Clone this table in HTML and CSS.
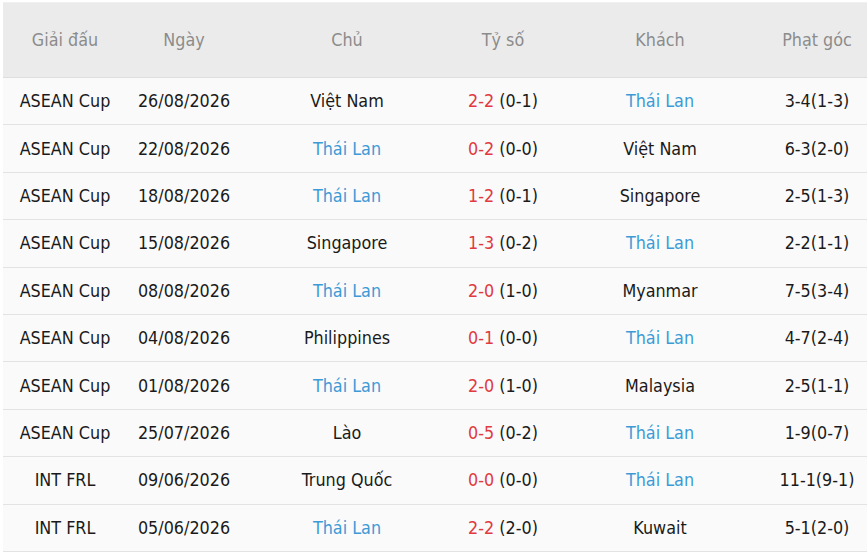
FILE: index.html
```html
<!DOCTYPE html>
<html lang="vi">
<head>
<meta charset="utf-8">
<link rel="stylesheet" href="styles.css">
</head>
<body>
<table class="matches">
  <colgroup>
    <col class="c1"><col class="c2"><col class="c3"><col class="c4"><col class="c5"><col class="c6">
  </colgroup>
  <thead>
    <tr><th>Giải đấu</th><th>Ngày</th><th>Chủ</th><th>Tỷ số</th><th>Khách</th><th>Phạt góc</th></tr>
  </thead>
  <tbody>
    <tr><td>ASEAN Cup</td><td>26/08/2026</td><td>Việt Nam</td><td><span class="sc">2-2</span> (0-1)</td><td class="th">Thái Lan</td><td>3-4(1-3)</td></tr>
    <tr><td>ASEAN Cup</td><td>22/08/2026</td><td class="th">Thái Lan</td><td><span class="sc">0-2</span> (0-0)</td><td>Việt Nam</td><td>6-3(2-0)</td></tr>
    <tr><td>ASEAN Cup</td><td>18/08/2026</td><td class="th">Thái Lan</td><td><span class="sc">1-2</span> (0-1)</td><td>Singapore</td><td>2-5(1-3)</td></tr>
    <tr><td>ASEAN Cup</td><td>15/08/2026</td><td>Singapore</td><td><span class="sc">1-3</span> (0-2)</td><td class="th">Thái Lan</td><td>2-2(1-1)</td></tr>
    <tr><td>ASEAN Cup</td><td>08/08/2026</td><td class="th">Thái Lan</td><td><span class="sc">2-0</span> (1-0)</td><td>Myanmar</td><td>7-5(3-4)</td></tr>
    <tr><td>ASEAN Cup</td><td>04/08/2026</td><td>Philippines</td><td><span class="sc">0-1</span> (0-0)</td><td class="th">Thái Lan</td><td>4-7(2-4)</td></tr>
    <tr><td>ASEAN Cup</td><td>01/08/2026</td><td class="th">Thái Lan</td><td><span class="sc">2-0</span> (1-0)</td><td>Malaysia</td><td>2-5(1-1)</td></tr>
    <tr><td>ASEAN Cup</td><td>25/07/2026</td><td>Lào</td><td><span class="sc">0-5</span> (0-2)</td><td class="th">Thái Lan</td><td>1-9(0-7)</td></tr>
    <tr><td>INT FRL</td><td>09/06/2026</td><td>Trung Quốc</td><td><span class="sc">0-0</span> (0-0)</td><td class="th">Thái Lan</td><td>11-1(9-1)</td></tr>
    <tr><td>INT FRL</td><td>05/06/2026</td><td class="th">Thái Lan</td><td><span class="sc">2-2</span> (2-0)</td><td>Kuwait</td><td>5-1(2-0)</td></tr>
  </tbody>
</table>
</body>
</html>
```
FILE: styles.css
```css
html, body {
  margin: 0;
  padding: 0;
  background: #ffffff;
}
body {
  padding: 2px 0 0 3px;
  font-family: "DejaVu Sans Condensed", "DejaVu Sans", sans-serif;
  font-size: 17.8px;
  line-height: 20px;
  color: #1a1a1a;
}
.matches {
  border-collapse: collapse;
  table-layout: fixed;
  width: 864px;
  border-top: 1px solid #f0f0f0;
}
.c1 { width: 124px; }
.c2 { width: 114px; }
.c3 { width: 212px; }
.c4 { width: 100px; }
.c5 { width: 214px; }
.c6 { width: 100px; }
th {
  height: 73px;
  padding: 0 0 1px;
  background: #ebebeb;
  color: #8c8c8c;
  font-weight: normal;
  text-align: center;
  border-bottom: 1px solid #dedede;
}
td {
  height: 46.4px;
  padding: 0;
  background: #fafafa;
  text-align: center;
  border-bottom: 1px solid #e3e3e3;
  white-space: nowrap;
}
.sc { color: #e0393e; }
.th { color: #3d9ad6; }
```
